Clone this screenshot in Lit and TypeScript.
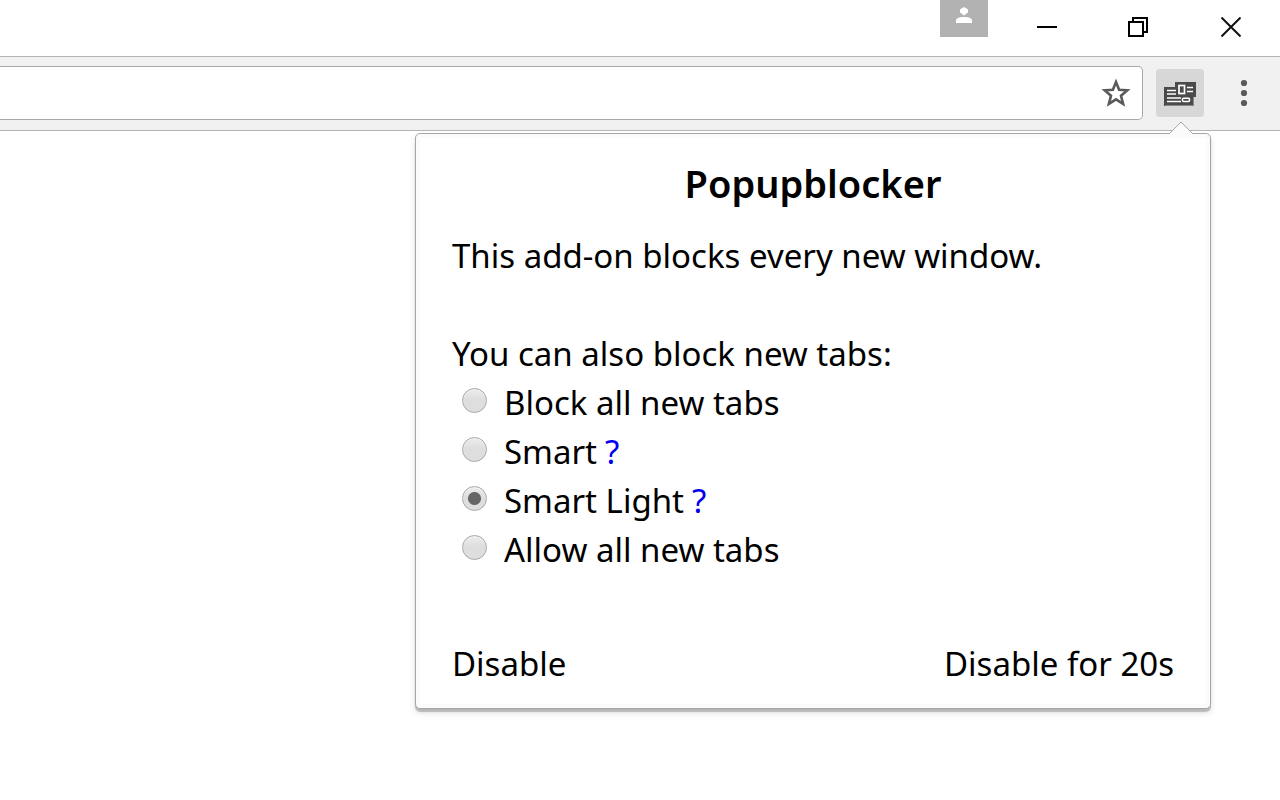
import { LitElement, html, css, svg } from "lit";
import { customElement, state } from "lit/decorators.js";

interface Mode {
  id: string;
  label: string;
  help: boolean;
}

const MODES: Mode[] = [
  { id: "block", label: "Block all new tabs", help: false },
  { id: "smart", label: "Smart", help: true },
  { id: "light", label: "Smart Light", help: true },
  { id: "allow", label: "Allow all new tabs", help: false },
];

@customElement("blocker-popup")
export class BlockerPopup extends LitElement {
  @state() private mode = "light";

  static styles = css`
    :host {
      display: block;
      box-sizing: border-box;
      padding: 25px 36px 20px;
      border: 1px solid #a6a6a6;
      border-radius: 5px;
      background: #fff;
      box-shadow: inset 0 0 0 4px #fbfbfb, 0 3px 1px rgba(0, 0, 0, 0.2), 0 4px 6px rgba(0, 0, 0, 0.12);
      font-size: 33px;
      line-height: 49px;
      color: #000;
    }
    .arrow {
      position: absolute;
      top: -13px;
      right: 16px;
      width: 26px;
      height: 14px;
      display: block;
    }
    h1 {
      margin: 0 0 23px;
      font-size: 38px;
      line-height: 49px;
      font-weight: 600;
      text-align: center;
    }
    p {
      margin: 0 0 49px;
    }
    fieldset {
      margin: 0;
      padding: 0;
      border: 0;
      min-width: 0;
    }
    legend {
      padding: 0;
    }
    .row {
      display: flex;
      align-items: center;
    }
    input {
      appearance: none;
      box-sizing: border-box;
      flex: none;
      width: 25px;
      height: 25px;
      margin: 0 17px 4px 10px;
      border: 1px solid #a8a8a8;
      border-radius: 50%;
      background: linear-gradient(#ededed, #dedede 45%, #dedede);
      box-shadow: inset 0 1px 1px #f4f4f4;
    }
    input:checked {
      background: radial-gradient(circle, #666 6px, transparent 7px), linear-gradient(#ededed, #dedede 45%, #dedede);
    }
    a {
      margin-left: 8px;
      color: #0000ee;
      text-decoration: none;
    }
    footer {
      display: flex;
      justify-content: space-between;
      margin-top: 65px;
    }
    button {
      padding: 0;
      border: 0;
      background: none;
      font: inherit;
      color: inherit;
    }
  `;

  render() {
    return html`
      <svg class="arrow" viewBox="0 0 26 14" aria-hidden="true">
        <path d="M0 14V13H1L13 1L25 13H26V14Z" fill="#fbfbfb" />
        <path d="M1 13L13 1L25 13" fill="none" stroke="#a6a6a6" stroke-width="1" />
      </svg>
      <h1>Popupblocker</h1>
      <p>This add-on blocks every new window.</p>
      <fieldset>
        <legend>You can also block new tabs:</legend>
        ${MODES.map(
          (m) => html`<div class="row">
            <input
              type="radio"
              name="mode"
              id=${m.id}
              .checked=${this.mode === m.id}
              @change=${() => (this.mode = m.id)}
            />
            <label for=${m.id}>${m.label}</label>
            ${m.help ? html`<a href="#${m.id}" aria-label="About ${m.label}">?</a>` : null}
          </div>`
        )}
      </fieldset>
      <footer>
        <button type="button">Disable</button>
        <button type="button">Disable for 20s</button>
      </footer>
    `;
  }
}

const person = svg`<path d="M8 3.500L9.500 2.500L12 1L14.500 2.500L16 3.500V6.500L14.500 7.500L12 9.500L9.500 7.500L8 6.500Z"/><path d="M4 17V14.500C4 12.500 7 11 12 11S20 12.500 20 14.500V17Z"/>`;

@customElement("app-root")
export class AppRoot extends LitElement {
  static styles = css`
    :host {
      display: flex;
      flex-direction: column;
      min-height: 100vh;
      background: #fff;
      font-family: "Noto Sans", "Open Sans", sans-serif;
    }
    svg {
      display: block;
    }
    button {
      display: flex;
      align-items: center;
      justify-content: center;
      padding: 0;
      border: 0;
      background: none;
    }
    .titlebar {
      display: flex;
      justify-content: flex-end;
      height: 56px;
      border-bottom: 1px solid #b4b4b4;
    }
    .profile {
      width: 48px;
      height: 37px;
      margin-right: 13px;
      align-items: flex-start;
      padding-top: 6px;
      background: #b2b2b2;
      fill: #fff;
    }
    .win {
      width: 92px;
      height: 54px;
    }
    .close {
      margin-right: 3px;
    }
    .toolbar {
      display: flex;
      align-items: center;
      box-sizing: border-box;
      height: 74px;
      padding-bottom: 1px;
      border-bottom: 1px solid #b4b4b4;
      background: #f1f1f1;
    }
    .omnibox {
      flex: 1;
      display: flex;
      align-items: center;
      box-sizing: border-box;
      height: 54px;
      padding-right: 10px;
      border: 1px solid #a9a9a9;
      border-left: 0;
      border-radius: 0 5px 5px 0;
      background: #fff;
    }
    .omnibox input {
      flex: 1;
      min-width: 0;
      border: 0;
      padding: 0 16px;
      outline: 0;
      background: none;
      font: inherit;
      font-size: 28px;
    }
    .extension {
      width: 48px;
      height: 48px;
      margin: 0 16px 0 13px;
      border-radius: 4px;
      background: #d7d7d7;
    }
    .menu {
      width: 48px;
      height: 48px;
      margin-right: 12px;
    }
    .page {
      position: relative;
      flex: 1;
    }
    blocker-popup {
      position: absolute;
      top: 2px;
      right: 69px;
      width: 796px;
    }
  `;

  render() {
    return html`
      <header class="titlebar">
        <button class="profile" type="button" aria-label="Profile">
          <svg width="24" height="18" viewBox="0 0 24 18">${person}</svg>
        </button>
        <button class="win" type="button" aria-label="Minimize">
          <svg width="20" height="20" viewBox="0 0 20 20"><path d="M0 9H20V11H0Z" /></svg>
        </button>
        <button class="win" type="button" aria-label="Restore">
          <svg width="22" height="20" viewBox="0 0 22 20" fill="none" stroke="#000" stroke-width="2">
            <path d="M1 5H15V19H1Z M5 5V1H19V15H15" />
          </svg>
        </button>
        <button class="win close" type="button" aria-label="Close">
          <svg width="20" height="20" viewBox="0 0 20 20" stroke="#111" stroke-width="2">
            <path d="M0.500 0.500L19.500 19.500M19.500 0.500L0.500 19.500" />
          </svg>
        </button>
      </header>
      <nav class="toolbar">
        <div class="omnibox">
          <input type="text" aria-label="Address" />
          <button type="button" aria-label="Bookmark this page">
            <svg width="32" height="32" viewBox="0 0 32 32" fill="none" stroke="#5a5a5a" stroke-width="2.600">
              <path d="M16 5L19.100 12.700L27.300 13.300L21 18.700L23.100 26.800L16 22.300L8.900 26.800L11 18.700L4.700 13.300L12.900 12.700Z" />
            </svg>
          </button>
        </div>
        <button class="extension" type="button" aria-label="Popupblocker">
          <svg width="32" height="26" viewBox="0 -2 32 26">
            <path d="M11 0H32V15H30V24H0V5H11Z" fill="#4a4a4a" />
            <path d="M29.500 15V23.500H1" fill="none" stroke="#8a8a8a" />
            <path d="M3 8.500H12M3 12H12M3 16H17M3 19.500H17M23 5.500H29M23 9.500H29" stroke="#fff" stroke-width="1.500" />
            <rect x="15" y="3.500" width="5.500" height="8" fill="none" stroke="#fff" stroke-width="1.700" />
            <rect x="18.500" y="16.200" width="7" height="3.300" rx="1" fill="#4a4a4a" stroke="#fff" stroke-width="1.500" />
          </svg>
        </button>
        <button class="menu" type="button" aria-label="Menu">
          <svg width="8" height="28" viewBox="0 0 8 28" fill="#5a5a5a">
            <circle cx="4" cy="4" r="3.100" /><circle cx="4" cy="14" r="3.100" /><circle cx="4" cy="24" r="3.100" />
          </svg>
        </button>
      </nav>
      <main class="page"><blocker-popup></blocker-popup></main>
    `;
  }
}
